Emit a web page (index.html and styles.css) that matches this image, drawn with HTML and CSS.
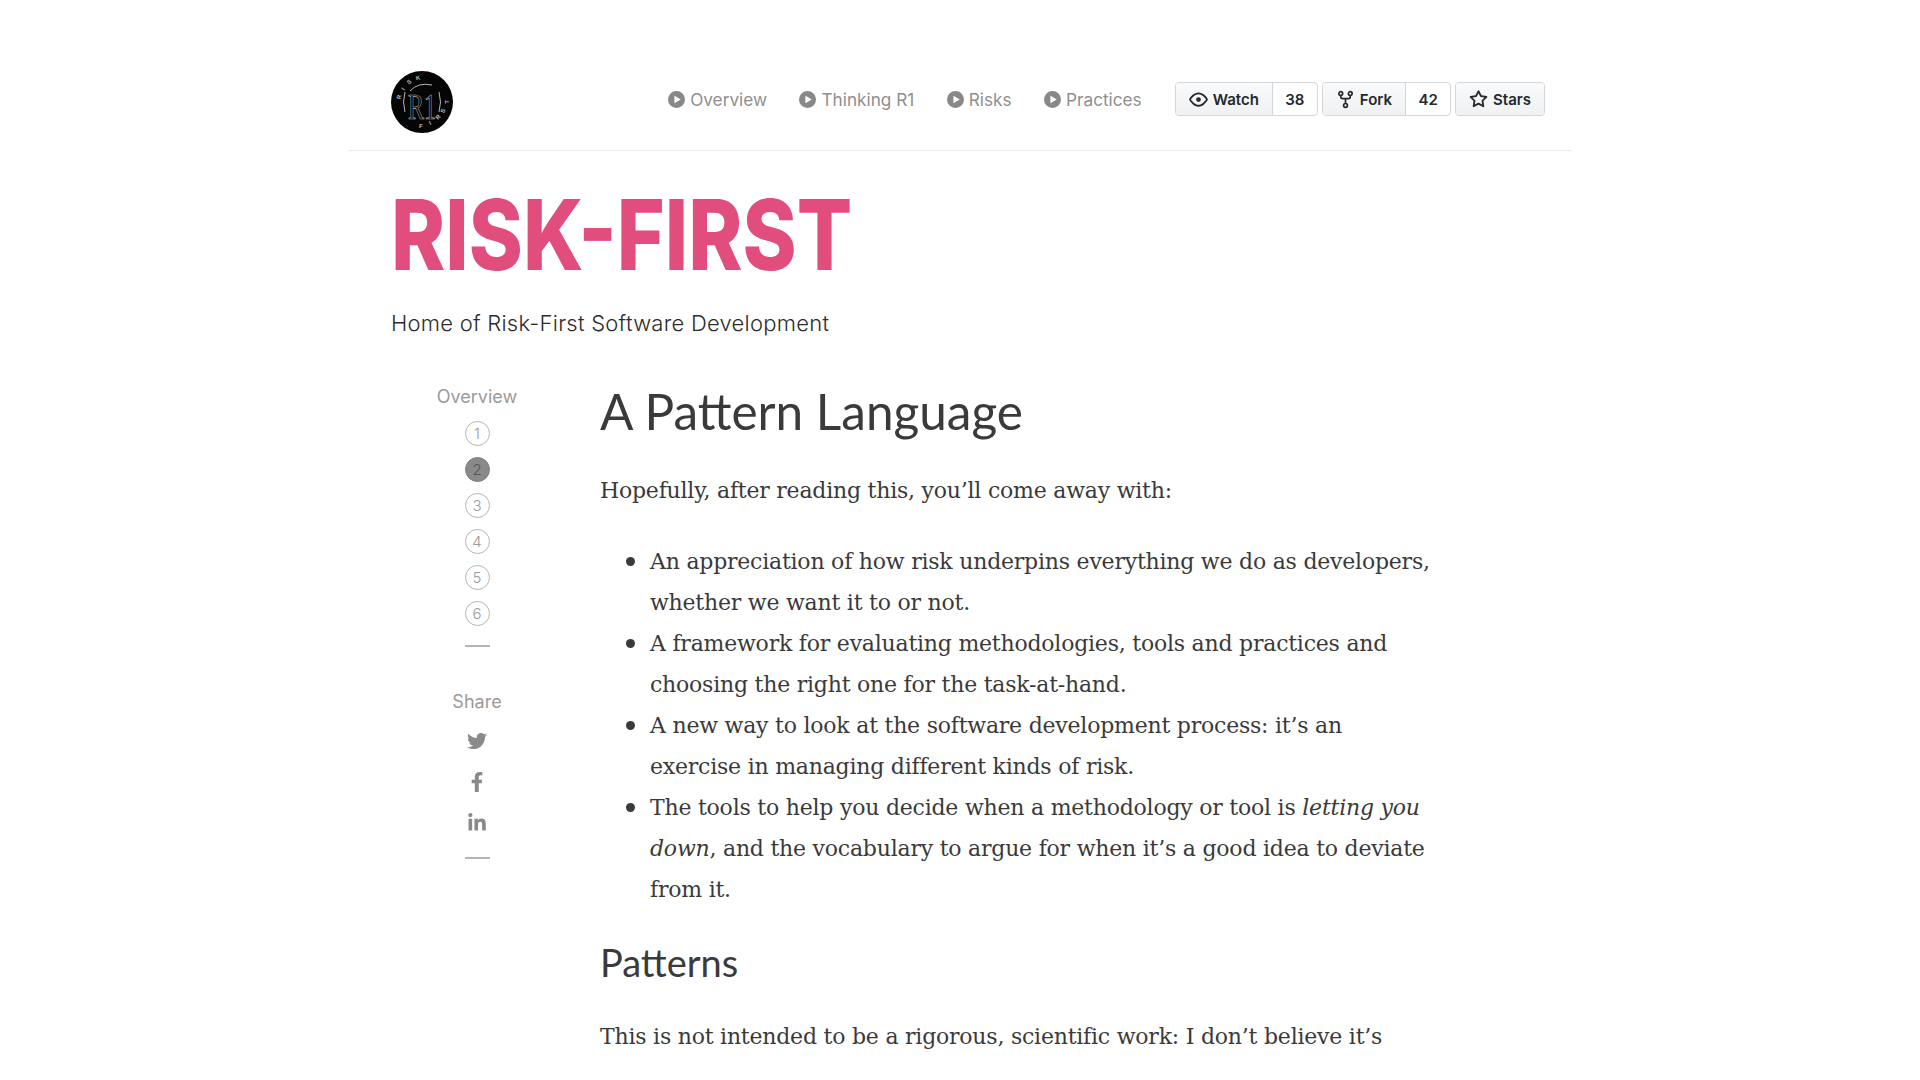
FILE: index.html
```html
<!DOCTYPE html>
<html lang="en">

<head>
    <meta charset="UTF-8">
    <title>Risk-First</title>
    <link rel="stylesheet" href="styles.css">
</head>

<body>
    <div class="container">
        <header class="topbar">
            <svg class="logo" viewBox="0 0 62 62">
                <circle cx="31" cy="31" r="31" fill="#050505" />
                <text class="logo-ring" transform="translate(8 26) rotate(-78)">R</text>
                <text class="logo-ring" transform="translate(12 18) rotate(-56)">I</text>
                <text class="logo-ring" transform="translate(18 11) rotate(-33)">S</text>
                <text class="logo-ring" transform="translate(27 7) rotate(-9)">K</text>
                <text class="logo-ring" transform="translate(30 55) rotate(2)">F</text>
                <text class="logo-ring" transform="translate(39 52) rotate(-21)">I</text>
                <text class="logo-ring" transform="translate(47 46) rotate(-47)">R</text>
                <text class="logo-ring" transform="translate(52 40) rotate(-67)">S</text>
                <text class="logo-ring" transform="translate(56 31) rotate(-90)">T</text>
                <text class="logo-mark" x="17" y="48" textLength="28" lengthAdjust="spacingAndGlyphs">R1</text>
                <path class="logo-line" d="M14 21q-3 10 0 20M48 21q3 10 0 20M19 20q8-9 22-6" />
            </svg>
            <nav class="nav">
                <a href="#"><svg class="play" viewBox="0 0 16 16"><path fill-rule="evenodd" d="M8 0a8 8 0 1 0 0 16A8 8 0 0 0 8 0zM6 4.400l6 3.600-6 3.600z" /></svg>Overview</a>
                <a href="#"><svg class="play" viewBox="0 0 16 16"><path fill-rule="evenodd" d="M8 0a8 8 0 1 0 0 16A8 8 0 0 0 8 0zM6 4.400l6 3.600-6 3.600z" /></svg>Thinking R1</a>
                <a href="#"><svg class="play" viewBox="0 0 16 16"><path fill-rule="evenodd" d="M8 0a8 8 0 1 0 0 16A8 8 0 0 0 8 0zM6 4.400l6 3.600-6 3.600z" /></svg>Risks</a>
                <a href="#"><svg class="play" viewBox="0 0 16 16"><path fill-rule="evenodd" d="M8 0a8 8 0 1 0 0 16A8 8 0 0 0 8 0zM6 4.400l6 3.600-6 3.600z" /></svg>Practices</a>
            </nav>
            <div class="gh-buttons">
                <div class="gh-group">
                    <a class="gh-btn" href="#"><svg class="gh-icon" viewBox="0 0 16 16"><path fill-rule="evenodd" d="M1.679 7.932c.412-.621 1.242-1.75 2.366-2.717C5.175 4.242 6.527 3.5 8 3.5c1.473 0 2.824.742 3.955 1.715 1.124.967 1.954 2.096 2.366 2.717a.119.119 0 010 .136c-.412.621-1.242 1.75-2.366 2.717C10.825 11.758 9.473 12.5 8 12.5c-1.473 0-2.824-.742-3.955-1.715C2.92 9.818 2.09 8.69 1.679 8.068a.119.119 0 010-.136zM8 2c-1.981 0-3.67.992-4.933 2.078C1.797 5.169.88 6.423.43 7.1a1.619 1.619 0 000 1.798c.45.678 1.367 1.932 2.637 3.024C4.329 13.008 6.019 14 8 14c1.981 0 3.67-.992 4.933-2.078 1.27-1.091 2.187-2.345 2.637-3.023a1.619 1.619 0 000-1.798c-.45-.678-1.367-1.932-2.637-3.023C11.671 2.992 9.981 2 8 2zm0 8a2 2 0 100-4 2 2 0 000 4z" /></svg>Watch</a>
                    <a class="gh-count" href="#">38</a>
                </div>
                <div class="gh-group">
                    <a class="gh-btn" href="#"><svg class="gh-icon" viewBox="0 0 16 16"><path class="fork-line" d="M4 4.500v1.200c0 1 .6 1.600 1.600 1.600h4.800c1 0 1.600-.6 1.600-1.600V4.500M8 7.300v4" /><circle class="fork-line" cx="4" cy="3" r="1.600" /><circle class="fork-line" cx="12" cy="3" r="1.600" /><circle class="fork-line" cx="8" cy="13" r="1.600" /></svg>Fork</a>
                    <a class="gh-count" href="#">42</a>
                </div>
                <div class="gh-group">
                    <a class="gh-btn" href="#"><svg class="gh-icon" viewBox="0 0 16 16"><path fill-rule="evenodd" d="M8 .25a.75.75 0 01.673.418l1.882 3.815 4.21.612a.75.75 0 01.416 1.279l-3.046 2.97.719 4.192a.75.75 0 01-1.088.791L8 12.347l-3.766 1.98a.75.75 0 01-1.088-.79l.72-4.194L.818 6.374a.75.75 0 01.416-1.28l4.21-.611L7.327.668A.75.75 0 018 .25zm0 2.445L6.615 5.5a.75.75 0 01-.564.41l-3.097.45 2.24 2.184a.75.75 0 01.216.664l-.528 3.084 2.769-1.456a.75.75 0 01.698 0l2.77 1.456-.53-3.084a.75.75 0 01.216-.664l2.24-2.183-3.096-.45a.75.75 0 01-.564-.41L8 2.694v.001z" /></svg>Stars</a>
                </div>
            </div>
        </header>

        <div class="masthead">
            <h1 class="site-title">RISK-FIRST</h1>
            <p class="site-sub">Home of Risk-First Software Development</p>
        </div>

        <div class="columns">
            <aside class="sidebar">
                <div class="side-label">Overview</div>
                <div class="pager">
                    <a href="#">1</a>
                    <a href="#" class="active">2</a>
                    <a href="#">3</a>
                    <a href="#">4</a>
                    <a href="#">5</a>
                    <a href="#">6</a>
                </div>
                <div class="side-rule"></div>
                <div class="side-label share-label">Share</div>
                <div class="share-icons">
                    <a href="#"><svg viewBox="0 0 512 512"><path d="M459.37 151.716c.325 4.548.325 9.097.325 13.645 0 138.72-105.583 298.558-298.558 298.558-59.452 0-114.68-17.219-161.137-47.106 8.447.974 16.568 1.299 25.34 1.299 49.055 0 94.213-16.568 130.274-44.832-46.132-.975-84.792-31.188-98.112-72.772 6.498.974 12.995 1.624 19.818 1.624 9.421 0 18.843-1.3 27.614-3.573-48.081-9.747-84.143-51.98-84.143-102.985v-1.299c13.969 7.797 30.214 12.67 47.431 13.319-28.264-18.843-46.781-51.005-46.781-87.391 0-19.492 5.197-37.36 14.294-52.954 51.655 63.675 129.3 105.258 216.365 109.807-1.624-7.797-2.599-15.918-2.599-24.04 0-57.828 46.782-104.934 104.934-104.934 30.213 0 57.502 12.67 76.67 33.137 23.715-4.548 46.456-13.32 66.599-25.34-7.798 24.366-24.366 44.833-46.132 57.827 21.117-2.273 41.584-8.122 60.426-16.243-14.292 20.791-32.161 39.308-52.628 54.253z" /></svg></a>
                    <a href="#"><svg viewBox="0 0 320 512"><path d="M279.14 288l14.22-92.66h-88.91v-60.13c0-25.35 12.42-50.06 52.24-50.06h40.42V6.26S260.43 0 225.36 0c-73.22 0-121.08 44.38-121.08 124.72v70.62H22.89V288h81.39v224h100.17V288z" /></svg></a>
                    <a href="#"><svg viewBox="0 0 448 512"><path d="M100.28 448H7.4V148.9h92.88zM53.79 108.1C24.09 108.1 0 83.5 0 53.8a53.79 53.79 0 0 1 107.58 0c0 29.7-24.1 54.3-53.79 54.3zM447.9 448h-92.68V302.4c0-34.7-.7-79.2-48.29-79.2-48.29 0-55.69 37.7-55.69 76.7V448h-92.78V148.9h89.08v40.8h1.3c12.4-23.5 42.69-48.3 87.88-48.3 94 0 111.28 61.9 111.28 142.3V448z" /></svg></a>
                </div>
                <div class="side-rule rule-end"></div>
            </aside>

            <main class="article">
                <h2>A Pattern Language</h2>
                <p>Hopefully, after reading this, you’ll come away with:</p>
                <ul>
                    <li>An appreciation of how risk underpins everything we do as developers,<br>whether we want it to or not.</li>
                    <li>A framework for evaluating methodologies, tools and practices and<br>choosing the right one for the task-at-hand.</li>
                    <li>A new way to look at the software development process: it’s an<br>exercise in managing different kinds of risk.</li>
                    <li>The tools to help you decide when a methodology or tool is <em>letting you<br>down</em>, and the vocabulary to argue for when it’s a good idea to deviate<br>from it.</li>
                </ul>
                <h3>Patterns</h3>
                <p class="last">This is not intended to be a rigorous, scientific work: I don’t believe it’s</p>
            </main>
        </div>
    </div>
</body>

</html>
```

FILE: styles.css
```css
html {
    overflow: hidden;
}

body {
    margin: 0;
    background-color: white;
    color: #3a3a3a;
    font-family: 'Inter', sans-serif;
}

a {
    color: inherit;
    text-decoration: none;
}

.container {
    width: 1224px;
    margin: 0 auto;
}

/* Top bar */
.topbar {
    display: flex;
    align-items: center;
    height: 151px;
    padding: 48px 27px 0 43px;
    box-sizing: border-box;
    border-bottom: 1px solid #eeeeee;
}

.logo {
    width: 62px;
    height: 62px;
    margin-top: 5px;
}

.logo-ring {
    font-family: 'Liberation Sans', sans-serif;
    font-size: 6px;
    font-weight: 700;
    fill: #bdbdbd;
    text-anchor: middle;
    dominant-baseline: central;
}

.logo-mark {
    font-family: 'Liberation Serif', serif;
    font-size: 36px;
    fill: #050505;
    stroke: #b5b5b5;
    stroke-width: 0.7;
}

.logo-line {
    fill: none;
    stroke: #b5b5b5;
    stroke-width: 1;
}

.nav {
    display: flex;
    align-items: center;
    gap: 32.5px;
    margin-left: auto;
    color: #8f8f8f;
    font-size: 17.2px;
}

.nav a {
    display: flex;
    align-items: center;
    gap: 5px;
}

.play {
    width: 17px;
    height: 17px;
    fill: #888888;
}

.gh-buttons {
    display: flex;
    gap: 4px;
    margin-left: 33px;
    color: #24292e;
    font-size: 15px;
    font-weight: 600;
}

.gh-group {
    display: flex;
    height: 34px;
    box-sizing: border-box;
    border: 1px solid #d5d6d8;
    border-radius: 4px;
    overflow: hidden;
}

.gh-btn {
    display: flex;
    align-items: center;
    gap: 5px;
    padding: 0 13px;
    background: linear-gradient(#f9fafb, #eff1f3);
}

.gh-count {
    display: flex;
    align-items: center;
    justify-content: center;
    width: 45px;
    border-left: 1px solid #d5d6d8;
    box-sizing: border-box;
}

.gh-icon {
    width: 19px;
    height: 19px;
    fill: #24292e;
}

.fork-line {
    fill: none;
    stroke: #24292e;
    stroke-width: 1.4;
}

/* Title */
.masthead {
    padding-left: 43px;
}

.site-title {
    margin: 36px 0 0;
    color: #e14e7d;
    font-size: 98px;
    font-weight: 800;
    line-height: 96px;
    /* the logotype is narrower than any installed face */
    transform: scaleX(0.837);
    transform-origin: left;
}

.site-sub {
    margin: 25px 0 0;
    color: #2c2c2c;
    font-size: 22px;
    font-weight: 300;
    line-height: 30px;
    letter-spacing: 0.25px;
}

/* Two columns */
.columns {
    display: flex;
    margin-top: 41px;
}

.sidebar {
    display: flex;
    flex-direction: column;
    align-items: center;
    flex: none;
    width: 98px;
    margin-left: 80px;
    padding-top: 6px;
    color: #9a9a9a;
}

.side-label {
    font-size: 18px;
    line-height: 24px;
}

.share-label {
    margin-top: 43px;
}

.pager {
    display: flex;
    flex-direction: column;
    gap: 11px;
    margin-top: 12px;
}

.pager a {
    display: flex;
    align-items: center;
    justify-content: center;
    width: 25px;
    height: 25px;
    box-sizing: border-box;
    border: 1.5px solid #b5b5b5;
    border-radius: 50%;
    font-size: 15px;
    font-weight: 300;
}

.pager a.active {
    background-color: #8a8a8a;
    border-color: #808080;
    color: #555555;
}

.side-rule {
    width: 25px;
    height: 2px;
    margin-top: 19px;
    background-color: #b5b5b5;
}

.rule-end {
    margin-top: 14px;
}

.share-icons {
    display: flex;
    flex-direction: column;
    margin-top: 6px;
}

.share-icons a {
    display: flex;
    align-items: center;
    justify-content: center;
    height: 41px;
}

.share-icons svg {
    width: 20px;
    height: 20px;
    fill: #8a8a8a;
}

.article {
    margin-left: 74px;
    font-family: 'DejaVu Serif', serif;
    font-size: 22px;
    line-height: 41px;
    letter-spacing: -0.22px;
}

.article h2 {
    margin: 0;
    font-family: 'Lato', sans-serif;
    font-size: 49.5px;
    font-weight: 400;
    line-height: 64px;
    letter-spacing: 0;
}

.article h3 {
    margin: 27px 0 0;
    font-family: 'Lato', sans-serif;
    font-size: 38px;
    font-weight: 400;
    line-height: 50px;
    letter-spacing: 0;
}

.article p {
    margin: 27px 0 0;
}

.article p.last {
    margin-top: 29px;
}

.article ul {
    margin: 30px 0 0;
    padding-left: 50px;
    list-style: none;
}

.article li {
    position: relative;
}

.article li::before {
    content: "";
    position: absolute;
    left: -24px;
    top: 16px;
    width: 9px;
    height: 9px;
    border-radius: 50%;
    background-color: #3a3a3a;
}
```
